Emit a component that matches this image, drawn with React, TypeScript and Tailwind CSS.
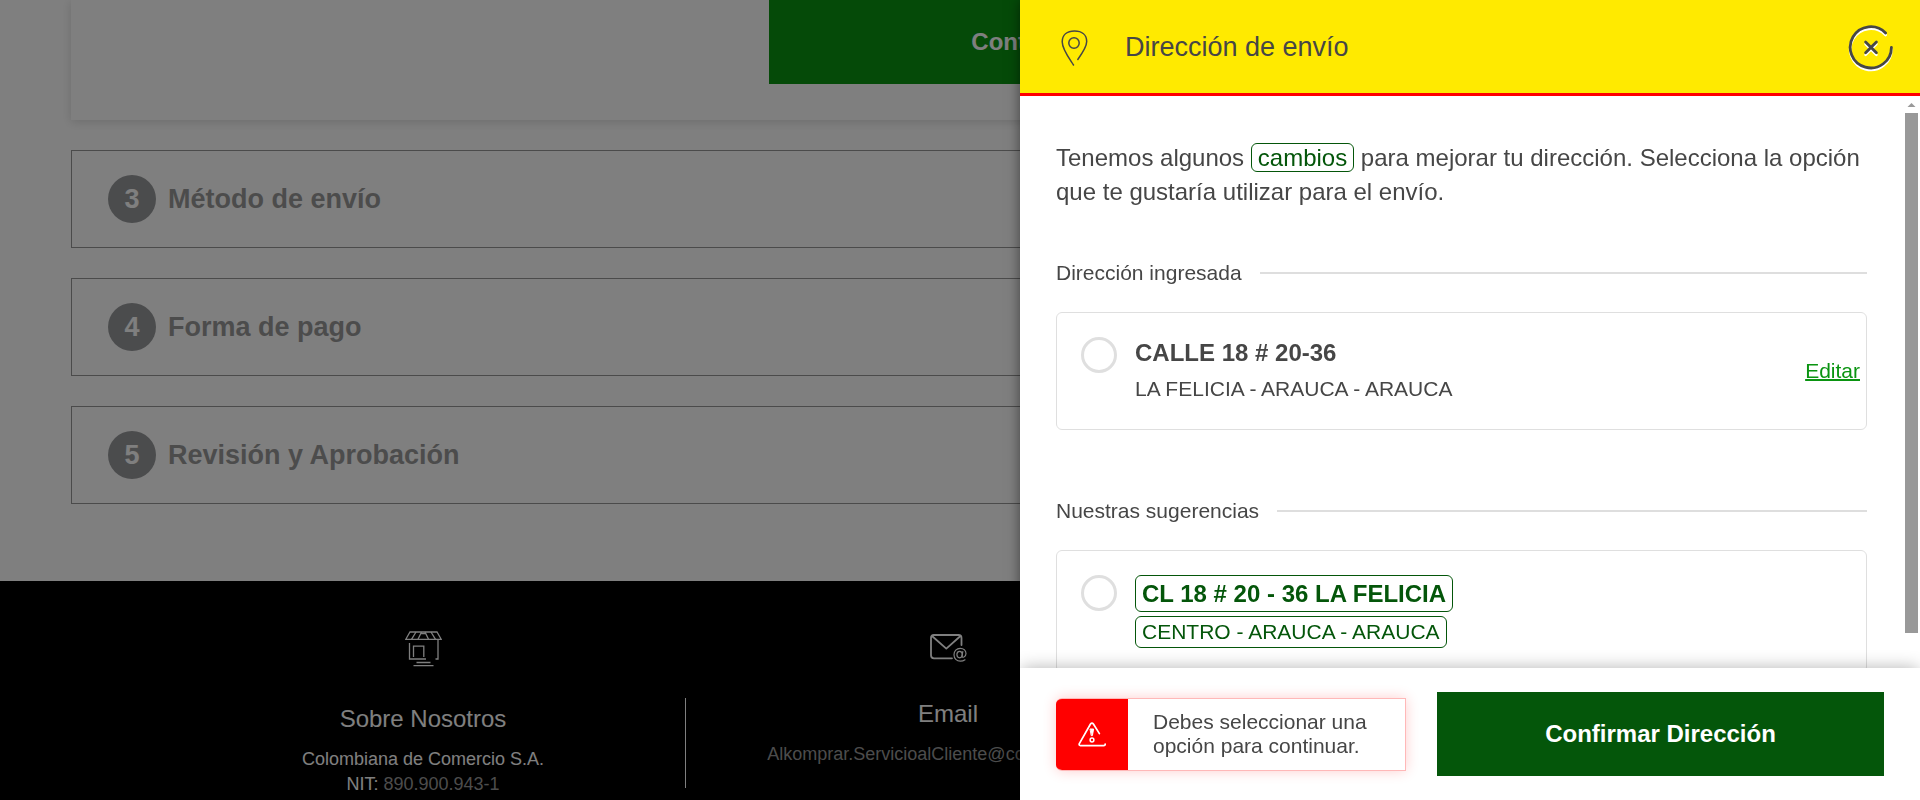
import React from "react";

const steps = [
  { number: 3, title: "Método de envío" },
  { number: 4, title: "Forma de pago" },
  { number: 5, title: "Revisión y Aprobación" },
];

function PinIcon() {
  return (
    <svg className="h-[38px] w-9 shrink-0" viewBox="0 0 36 38" fill="none" stroke="#464646" strokeWidth="1.5" strokeLinecap="round" aria-hidden="true">
      <path d="M17.5 36 C14 30.5 6.2 20.5 6.2 12.8 C6.2 6 11 2 18.5 2 C26 2 30.7 6 30.7 12.6 C30.7 18 26.5 24 21.8 30.5" />
      <circle cx="18" cy="14" r="5.2" />
    </svg>
  );
}

function CloseIcon() {
  const shapes = (
    <>
      <path d="M37.6 9 A20.6 20.6 0 1 0 43.4 23.4" />
      <path d="M17.6 18 L28.4 28.8 M28.4 18 L17.6 28.8" />
    </>
  );
  return (
    <svg className="h-12 w-[46px]" viewBox="0 0 46 48" fill="none" strokeLinecap="round" aria-hidden="true">
      <g stroke="#fff" strokeWidth="2.6" transform="translate(0 2)">{shapes}</g>
      <g stroke="#464646" strokeWidth="2.8">{shapes}</g>
    </svg>
  );
}

function WarningIcon() {
  return (
    <svg className="h-[25px] w-[29px]" viewBox="0 0 29 25" fill="none" stroke="#fff" strokeWidth="1.7" strokeLinecap="round" strokeLinejoin="round" aria-hidden="true">
      <path d="M21.4 11.6 L15.4 2 Q14 .2 12.5 2 L1.2 21.8 Q.8 23.6 2.4 23.6 H25.6 Q27.4 23.6 27.2 22" />
      <path d="M12.4 7 H15.6 L14.4 13.6 H13.6 Z" fill="#fff" strokeWidth="1" />
      <circle cx="14" cy="18" r="1.9" strokeWidth="1.5" />
    </svg>
  );
}

function StoreIcon() {
  return (
    <svg className="h-9 w-[37px]" viewBox="0 0 37 36" fill="none" stroke="#fff" strokeWidth="1.3" aria-hidden="true">
      <path d="M5 1 H32 L36.2 8.3 H.8 Z" />
      <path d="M11 1 L6.5 8.3 M16.5 1 L13 8.3 M20 1 L23.5 8.3 M26 1 L30.5 8.3 M15.5 2.5 H21" />
      <path d="M4.5 12 V28 H21 M33 8.5 V28 H30.5" />
      <path d="M8.5 26 V15.2 H18.8 V26" />
      <path d="M11.5 31.5 H25.5 M8.5 34.7 H28.5" />
    </svg>
  );
}

function MailIcon() {
  return (
    <svg className="h-[31px] w-[37px]" viewBox="0 0 37 31" fill="none" stroke="#fff" strokeWidth="1.8" strokeLinecap="round" strokeLinejoin="round" aria-hidden="true">
      <path d="M22 27.3 H4 Q1 27.3 1 24.3 V7 Q1 4 4 4 H28.5 Q31.5 4 31.5 7 V14" />
      <path d="M2 5 L16.3 17.6 L30.5 5" />
      <g strokeWidth="1.2">
        <ellipse cx="29.6" cy="23.6" rx="2.7" ry="3.2" />
        <path d="M32.8 20.6 L32 25.2 C31.9 27.3 36 26.2 36 22.6 C36 19.4 33.4 17.3 30.2 17.3 C26.6 17.3 24 20.2 24 23.7 C24 27.4 26.6 30.2 30.4 30.2 Q33 30.2 35 28.8" />
      </g>
    </svg>
  );
}

function SectionTitle({ children }: { children: React.ReactNode }) {
  return (
    <div className="flex items-center gap-[18px]">
      <h3 className="text-[21px] leading-6">{children}</h3>
      <div className="h-0.5 flex-1 bg-[#dedede]" />
    </div>
  );
}

function Radio({ id }: { id: string }) {
  return (
    <input
      type="radio"
      id={id}
      name="direccion"
      className="size-9 shrink-0 appearance-none rounded-full border-3 border-[#dfdfdf] bg-white checked:border-[#04560a] checked:bg-[#04560a]"
    />
  );
}

function FooterColumn({ icon, title, children }: { icon: React.ReactNode; title: string; children: React.ReactNode }) {
  return (
    <div className="flex w-[524px] flex-col items-center pt-[50px] text-center">
      {icon}
      <h4 className="mt-[34px] mb-2.5 text-2xl leading-9">{title}</h4>
      <div className="text-lg leading-[25px]">{children}</div>
    </div>
  );
}

export default function App() {
  return (
    <div className="relative flex min-h-screen flex-col overflow-hidden bg-white font-['Liberation_Sans',Arial,sans-serif]">
      <main className="flex max-w-[1323px] flex-col gap-[30px] pb-[77px] pl-[71px]">
        <section className="flex justify-end px-9 pb-9 shadow-[0_2px_10px_rgba(0,0,0,0.15)]">
          <button type="button" className="h-[84px] w-[518px] bg-[#0a9411] text-2xl font-bold text-white">
            Continuar
          </button>
        </section>
        {steps.map((step) => (
          <section key={step.number} className="flex items-center gap-3 border border-[#979797] px-9 py-6 text-[27px] font-bold text-[#999]">
            <span className="flex size-12 items-center justify-center rounded-full bg-[#97999b] text-white">{step.number}</span>
            <h2>{step.title}</h2>
          </section>
        ))}
      </main>

      <footer className="flex flex-1 bg-black pl-[161px] text-white">
        <FooterColumn icon={<StoreIcon />} title="Sobre Nosotros">
          <p>Colombiana de Comercio S.A.</p>
          <p>
            NIT: <span className="text-[#999]">890.900.943-1</span>
          </p>
        </FooterColumn>
        <div className="mt-[117px] h-[90px] w-px bg-white" />
        <FooterColumn icon={<MailIcon />} title="Email">
          <a href="mailto:Alkomprar.ServicioalCliente@corbeta.com.co" className="text-[#999]">
            Alkomprar.ServicioalCliente@corbeta.com.co
          </a>
        </FooterColumn>
      </footer>

      <div className="absolute inset-0 bg-black/50" />

      <aside
        role="dialog"
        aria-labelledby="panel-title"
        className="fixed inset-y-0 right-0 flex w-[900px] max-w-full flex-col bg-white text-[#464646] shadow-[0_0_12px_rgba(0,0,0,0.5)]"
      >
        <header className="flex h-24 shrink-0 items-center gap-[33px] border-b-3 border-[#f00] bg-[#ffea00] pt-0.5 pr-[26px] pl-9">
          <PinIcon />
          <h1 id="panel-title" className="flex-1 text-[27px]">
            Dirección de envío
          </h1>
          <button type="button" aria-label="Cerrar">
            <CloseIcon />
          </button>
        </header>

        <div className="flex min-h-0 flex-1">
          <div className="flex-1 overflow-hidden px-9 pt-[45px]">
            <p className="text-2xl leading-[34px]">
              Tenemos algunos{" "}
              <span className="rounded-md border border-[#04560a] px-1.5 text-[#04560a]">cambios</span> para mejorar tu
              dirección. Selecciona la opción que te gustaría utilizar para el envío.
            </p>

            <section className="mt-[52px] flex flex-col gap-[27px]">
              <SectionTitle>Dirección ingresada</SectionTitle>
              <div className="flex items-center rounded-md border border-[#dfdfdf] py-6 pr-1.5 pl-6">
                <div className="flex flex-1 items-start gap-[18px]">
                  <Radio id="ingresada" />
                  <label htmlFor="ingresada" className="flex flex-col gap-1">
                    <strong className="text-2xl leading-8">CALLE 18 # 20-36</strong>
                    <span className="text-[21px] leading-8">LA FELICIA - ARAUCA - ARAUCA</span>
                  </label>
                </div>
                <a href="#editar" className="text-[21px] text-[#0a9411] underline decoration-2">
                  Editar
                </a>
              </div>
            </section>

            <section className="mt-[69px] flex flex-col gap-[27px]">
              <SectionTitle>Nuestras sugerencias</SectionTitle>
              <div className="flex items-start gap-[18px] rounded-md border border-[#dfdfdf] p-6">
                <Radio id="sugerida" />
                <label htmlFor="sugerida" className="flex flex-col items-start gap-1 text-[#04560a]">
                  <strong className="rounded-md border border-[#04560a] px-1.5 text-2xl leading-[35px]">
                    CL 18 # 20 - 36 LA FELICIA
                  </strong>
                  <span className="rounded-md border border-[#04560a] px-1.5 text-[21px] leading-[30px]">
                    CENTRO - ARAUCA - ARAUCA
                  </span>
                </label>
              </div>
            </section>
          </div>

          <div className="flex w-[17px] flex-col items-center pb-[35px]" aria-hidden="true">
            <svg className="h-[17px] w-[17px]" viewBox="0 0 17 17" fill="#999">
              <path d="M4.5 11 L8.5 7 L12.5 11 Z" />
            </svg>
            <div className="w-[13px] flex-1 bg-[#999]" />
          </div>
        </div>

        <footer className="relative flex shrink-0 items-center gap-[31px] bg-white px-9 py-6 shadow-[0_-2px_16px_-2px_rgba(0,0,0,0.3)]">
          <div role="alert" className="flex w-[350px] overflow-hidden rounded-l-md border border-l-0 border-[#ffb8b8] shadow-[0_0_14px_rgba(255,0,0,0.2)]">
            <div className="flex h-[71px] w-[72px] shrink-0 items-center justify-center bg-[#f00]">
              <WarningIcon />
            </div>
            <p className="flex-1 self-center px-[25px] text-[21px] leading-6">Debes seleccionar una opción para continuar.</p>
          </div>
          <button type="button" className="h-[84px] flex-1 bg-[#04560a] text-2xl font-bold text-white">
            Confirmar Dirección
          </button>
        </footer>
      </aside>
    </div>
  );
}
